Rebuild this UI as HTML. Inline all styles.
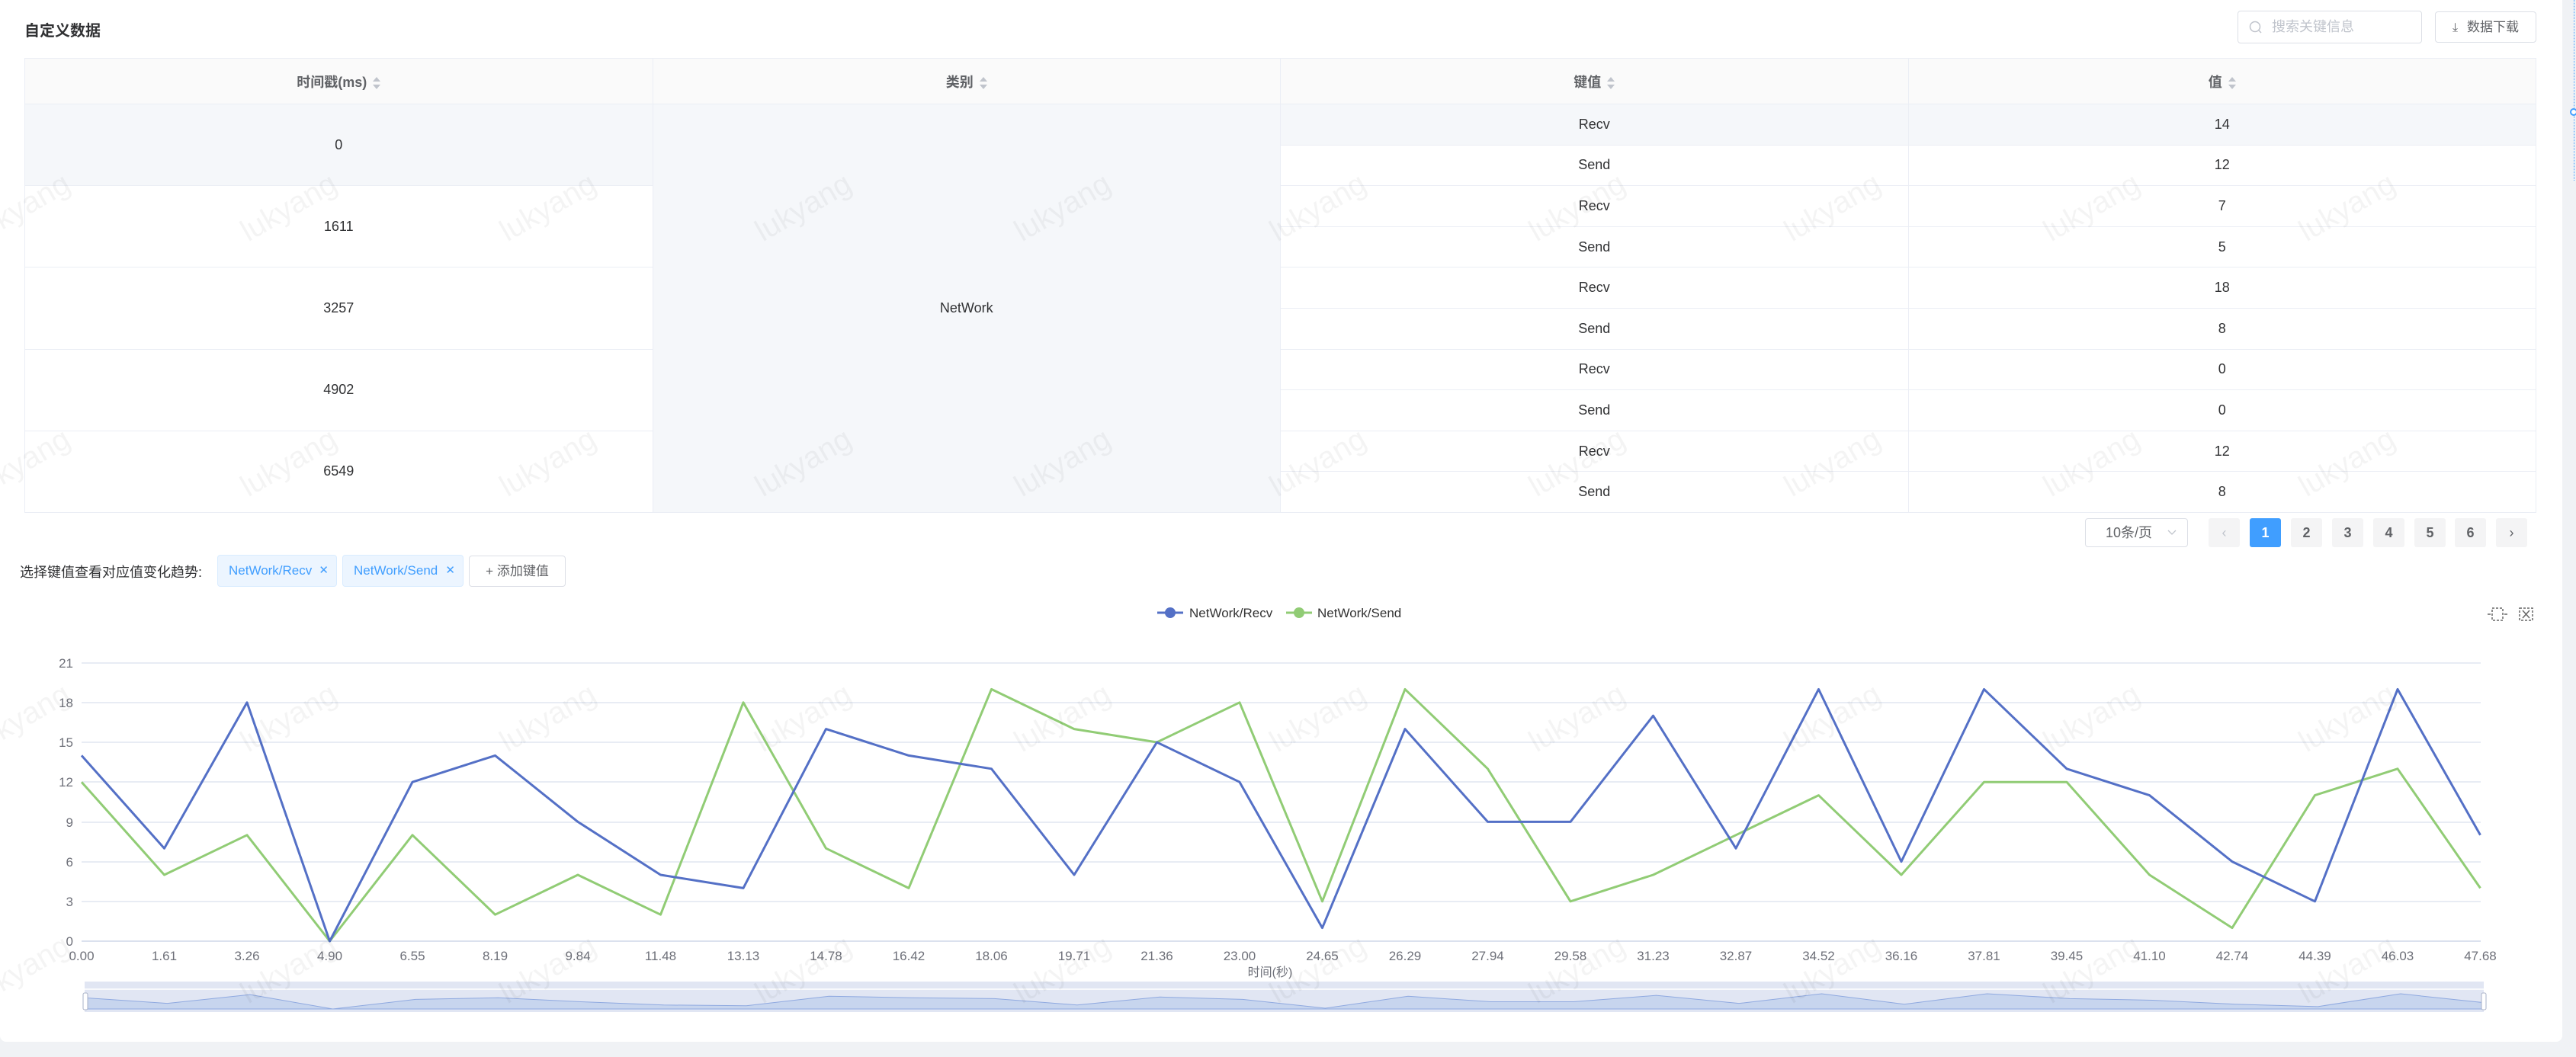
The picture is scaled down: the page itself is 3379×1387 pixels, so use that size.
<!DOCTYPE html>
<html><head><meta charset="utf-8">
<style>
*{box-sizing:border-box;margin:0;padding:0}
body{width:3379px;height:1387px;background:#f0f2f5;font-family:"Liberation Sans","Noto Sans CJK SC",sans-serif;position:relative;overflow:hidden;color:#303133}
.card{position:absolute;left:0;top:0;width:3361px;height:1367px;background:#fff;border-radius:0 0 8px 8px}
.abs{position:absolute}
.title{left:32px;top:24px;font-size:20px;font-weight:bold;color:#303133}
.search{left:2935px;top:14px;width:242px;height:43px;border:1px solid #dcdfe6;border-radius:4px;font-size:18px;color:#c0c4cc;line-height:41px;padding-left:44px}
.dl{left:3194px;top:15px;width:133px;height:41px;border:1px solid #dcdfe6;border-radius:4px;font-size:17px;color:#606266;line-height:39px;text-align:center}
table{position:absolute;left:32px;top:76px;width:3295px;border-collapse:collapse;table-layout:fixed;font-size:18px;color:#303133}
td,th{border:1px solid #ebeef5;text-align:center}
th{height:60px;background:#fafafa;color:#606266;font-weight:bold}
td{height:53.6px}
.g{background:#f5f7fa}
.sort{display:inline-block;vertical-align:middle;margin-left:8px;width:10px;height:20px;position:relative}
.sort:before{content:"";position:absolute;left:0;top:2px;border:5px solid transparent;border-bottom:6px solid #c0c4cc;border-top:0}
.sort:after{content:"";position:absolute;left:0;top:12px;border:5px solid transparent;border-top:6px solid #c0c4cc;border-bottom:0}
.pg{top:680px;height:38px;width:41px;background:#f4f4f5;border-radius:3px;font-size:18px;font-weight:bold;color:#606266;text-align:center;line-height:38px}
.tag{top:728px;height:42px;background:#ecf5ff;border:1px solid #d9ecff;border-radius:4px;color:#409eff;font-size:17px;line-height:40px;padding-left:14px}
.tag span{position:absolute;right:10px;top:0;font-size:15px}
.wm{position:absolute;font-size:40px;color:rgba(0,0,0,0.045);transform:rotate(-30deg);white-space:nowrap}
</style></head><body>
<div class="card"></div>
<div class="abs" style="left:3376px;top:0;width:0;height:237px;border-left:1px dotted #409eff"></div>
<div class="abs" style="left:3371px;top:142px;width:10px;height:10px;border:2px solid #409eff;border-radius:50%;background:#fff"></div>

<div class="abs title">自定义数据</div>
<div class="abs search"><svg class="abs" style="left:14px;top:12px" width="18" height="18" viewBox="0 0 18 18"><circle cx="8" cy="8" r="6.5" fill="none" stroke="#c0c4cc" stroke-width="1.5"/><line x1="12.5" y1="12.5" x2="16" y2="16" stroke="#c0c4cc" stroke-width="1.5"/></svg>搜索关键信息</div>
<div class="abs dl"><span style="font-size:16px;margin-right:12px">⤓</span>数据下载</div>

<table>
<colgroup><col><col><col><col></colgroup>
<tr><th>时间戳(ms)<span class="sort"></span></th><th>类别<span class="sort"></span></th><th>键值<span class="sort"></span></th><th>值<span class="sort"></span></th></tr>
<tr><td rowspan="2" class="g">0</td><td rowspan="10" class="g">NetWork</td><td class="g">Recv</td><td class="g">14</td></tr>
<tr><td>Send</td><td>12</td></tr>
<tr><td rowspan="2">1611</td><td>Recv</td><td>7</td></tr>
<tr><td>Send</td><td>5</td></tr>
<tr><td rowspan="2">3257</td><td>Recv</td><td>18</td></tr>
<tr><td>Send</td><td>8</td></tr>
<tr><td rowspan="2">4902</td><td>Recv</td><td>0</td></tr>
<tr><td>Send</td><td>0</td></tr>
<tr><td rowspan="2">6549</td><td>Recv</td><td>12</td></tr>
<tr><td>Send</td><td>8</td></tr>
</table>

<div class="abs" style="left:2735px;top:680px;width:135px;height:38px;border:1px solid #dcdfe6;border-radius:4px;font-size:18px;color:#606266;line-height:36px;padding-left:26px">10条/页<svg class="abs" style="right:14px;top:14px" width="12" height="8" viewBox="0 0 12 8"><path d="M1 1l5 5 5-5" fill="none" stroke="#c0c4cc" stroke-width="1.3"/></svg></div>
<div class="abs pg" style="left:2897px;color:#c0c4cc;font-weight:normal">&lsaquo;</div>
<div class="abs pg" style="left:2951px;background:#409eff;color:#fff">1</div>
<div class="abs pg" style="left:3005px">2</div>
<div class="abs pg" style="left:3059px">3</div>
<div class="abs pg" style="left:3113px">4</div>
<div class="abs pg" style="left:3167px">5</div>
<div class="abs pg" style="left:3220px">6</div>
<div class="abs pg" style="left:3274px;font-weight:normal">&rsaquo;</div>

<div class="abs" style="left:26px;top:737px;font-size:18px;color:#303133">选择键值查看对应值变化趋势:</div>
<div class="abs tag" style="left:285px;width:157px">NetWork/Recv<span>✕</span></div>
<div class="abs tag" style="left:449px;width:159px">NetWork/Send<span>✕</span></div>
<div class="abs" style="left:615px;top:729px;width:127px;height:41px;border:1px solid #dcdfe6;border-radius:4px;font-size:17px;color:#606266;line-height:39px;text-align:center">+ 添加键值</div>

<svg class="abs" style="left:0;top:0" width="3379" height="1387">
<g font-family="Liberation Sans, Noto Sans CJK SC, sans-serif" font-size="17" fill="#6e7079">
<line x1="1518" y1="804" x2="1552" y2="804" stroke="#5470c6" stroke-width="3"/><circle cx="1535" cy="804" r="7" fill="#5470c6"/>
<text x="1560" y="810" fill="#333">NetWork/Recv</text>
<line x1="1687" y1="804" x2="1721" y2="804" stroke="#91cc75" stroke-width="3"/><circle cx="1704" cy="804" r="7" fill="#91cc75"/>
<text x="1728" y="810" fill="#333">NetWork/Send</text>
<g stroke="#666" fill="none" stroke-width="1.5" stroke-dasharray="3,2">
<rect x="3269" y="798" width="14" height="16"/><rect x="3305" y="798" width="17" height="16"/></g>
<path d="M3263 806h4M3285 806h4M3309 801l9 10M3318 801l-9 10" stroke="#666" stroke-width="1.5"/>
<g stroke="#e0e6f1" stroke-width="1.5">
<line x1="107" y1="870" x2="3254" y2="870"/><line x1="107" y1="922" x2="3254" y2="922"/><line x1="107" y1="974" x2="3254" y2="974"/><line x1="107" y1="1026" x2="3254" y2="1026"/><line x1="107" y1="1079" x2="3254" y2="1079"/><line x1="107" y1="1131" x2="3254" y2="1131"/><line x1="107" y1="1183" x2="3254" y2="1183"/><line x1="107" y1="1235" x2="3254" y2="1235" stroke="#dbe1ee" stroke-width="2"/>
</g>
<g text-anchor="end"><text x="96" y="876">21</text><text x="96" y="928">18</text><text x="96" y="980">15</text><text x="96" y="1032">12</text><text x="96" y="1085">9</text><text x="96" y="1137">6</text><text x="96" y="1189">3</text><text x="96" y="1241">0</text></g>
<g text-anchor="middle">
<text x="107" y="1260">0.00</text><text x="215.5" y="1260">1.61</text><text x="324" y="1260">3.26</text><text x="432.5" y="1260">4.90</text><text x="541" y="1260">6.55</text><text x="649.5" y="1260">8.19</text><text x="758" y="1260">9.84</text><text x="866.5" y="1260">11.48</text><text x="975" y="1260">13.13</text><text x="1083.5" y="1260">14.78</text><text x="1192" y="1260">16.42</text><text x="1300.5" y="1260">18.06</text><text x="1409" y="1260">19.71</text><text x="1517.5" y="1260">21.36</text><text x="1626" y="1260">23.00</text><text x="1734.5" y="1260">24.65</text><text x="1843" y="1260">26.29</text><text x="1951.5" y="1260">27.94</text><text x="2060" y="1260">29.58</text><text x="2168.5" y="1260">31.23</text><text x="2277" y="1260">32.87</text><text x="2385.5" y="1260">34.52</text><text x="2494" y="1260">36.16</text><text x="2602.5" y="1260">37.81</text><text x="2711" y="1260">39.45</text><text x="2819.5" y="1260">41.10</text><text x="2928" y="1260">42.74</text><text x="3036.5" y="1260">44.39</text><text x="3145" y="1260">46.03</text><text x="3253.5" y="1260">47.68</text>
<text x="1666" y="1281" font-size="16">时间(秒)</text>
</g>
<g transform="translate(107,1235) scale(108.5,-17.4)" fill="none" stroke-linejoin="round">
<polyline vector-effect="non-scaling-stroke" stroke="#91cc75" stroke-width="3" points="0,12 1,5 2,8 3,0 4,8 5,2 6,5 7,2 8,18 9,7 10,4 11,19 12,16 13,15 14,18 15,3 16,19 17,13 18,3 19,5 20,8 21,11 22,5 23,12 24,12 25,5 26,1 27,11 28,13 29,4"/>
<polyline vector-effect="non-scaling-stroke" stroke="#5470c6" stroke-width="3" points="0,14 1,7 2,18 3,0 4,12 5,14 6,9 7,5 8,4 9,16 10,14 11,13 12,5 13,15 14,12 15,1 16,16 17,9 18,9 19,17 20,7 21,19 22,6 23,19 24,13 25,11 26,6 27,3 28,19 29,8"/>
</g>
<rect x="111" y="1288" width="3147" height="40" fill="#e1e6f3"/>
<line x1="111" y1="1298" x2="3258" y2="1298" stroke="#fff" stroke-width="1.5"/>
<g transform="translate(111,1324) scale(108.5,-1.05)">
<polygon fill="#c7d5ee" stroke="#8fa9e0" vector-effect="non-scaling-stroke" stroke-width="1" points="0,0 0,14 1,7 2,18 3,0 4,12 5,14 6,9 7,5 8,4 9,16 10,14 11,13 12,5 13,15 14,12 15,1 16,16 17,9 18,9 19,17 20,7 21,19 22,6 23,19 24,13 25,11 26,6 27,3 28,19 29,8 29,0"/>
</g>
<rect x="109" y="1303" width="6" height="22" rx="2" fill="#fff" stroke="#aab3c8"/>
<rect x="3255" y="1303" width="6" height="22" rx="2" fill="#fff" stroke="#aab3c8"/>
</g>
</svg>

<div class="wm" style="left:-40px;top:250px">lukyang</div><div class="wm" style="left:310px;top:250px">lukyang</div><div class="wm" style="left:650px;top:250px">lukyang</div><div class="wm" style="left:985px;top:250px">lukyang</div><div class="wm" style="left:1325px;top:250px">lukyang</div><div class="wm" style="left:1660px;top:250px">lukyang</div><div class="wm" style="left:2000px;top:250px">lukyang</div><div class="wm" style="left:2335px;top:250px">lukyang</div><div class="wm" style="left:2675px;top:250px">lukyang</div><div class="wm" style="left:3010px;top:250px">lukyang</div>
<div class="wm" style="left:-40px;top:585px">lukyang</div><div class="wm" style="left:310px;top:585px">lukyang</div><div class="wm" style="left:650px;top:585px">lukyang</div><div class="wm" style="left:985px;top:585px">lukyang</div><div class="wm" style="left:1325px;top:585px">lukyang</div><div class="wm" style="left:1660px;top:585px">lukyang</div><div class="wm" style="left:2000px;top:585px">lukyang</div><div class="wm" style="left:2335px;top:585px">lukyang</div><div class="wm" style="left:2675px;top:585px">lukyang</div><div class="wm" style="left:3010px;top:585px">lukyang</div>
<div class="wm" style="left:-40px;top:920px">lukyang</div><div class="wm" style="left:310px;top:920px">lukyang</div><div class="wm" style="left:650px;top:920px">lukyang</div><div class="wm" style="left:985px;top:920px">lukyang</div><div class="wm" style="left:1325px;top:920px">lukyang</div><div class="wm" style="left:1660px;top:920px">lukyang</div><div class="wm" style="left:2000px;top:920px">lukyang</div><div class="wm" style="left:2335px;top:920px">lukyang</div><div class="wm" style="left:2675px;top:920px">lukyang</div><div class="wm" style="left:3010px;top:920px">lukyang</div>
<div class="wm" style="left:-40px;top:1250px">lukyang</div><div class="wm" style="left:310px;top:1250px">lukyang</div><div class="wm" style="left:650px;top:1250px">lukyang</div><div class="wm" style="left:985px;top:1250px">lukyang</div><div class="wm" style="left:1325px;top:1250px">lukyang</div><div class="wm" style="left:1660px;top:1250px">lukyang</div><div class="wm" style="left:2000px;top:1250px">lukyang</div><div class="wm" style="left:2335px;top:1250px">lukyang</div><div class="wm" style="left:2675px;top:1250px">lukyang</div><div class="wm" style="left:3010px;top:1250px">lukyang</div>
</body></html>
